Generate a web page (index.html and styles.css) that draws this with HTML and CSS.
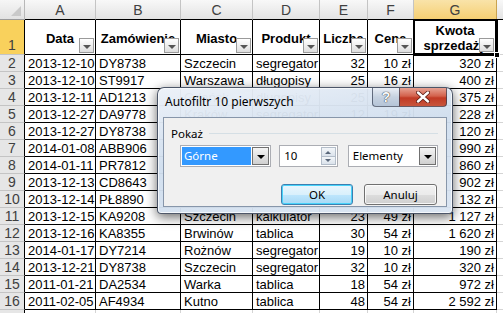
FILE: index.html
```html
<!DOCTYPE html>
<html lang="pl">
<head>
    <meta charset="UTF-8">
    <title>Autofiltr 10 pierwszych</title>
    <link rel="stylesheet" href="styles.css">
</head>
<body>
    <div class="sheet">
        <div class="grid">
            <!-- column letters -->
            <div class="corner"><span class="corner-tri"></span></div>
            <div class="colhead">A</div>
            <div class="colhead">B</div>
            <div class="colhead">C</div>
            <div class="colhead">D</div>
            <div class="colhead">E</div>
            <div class="colhead">F</div>
            <div class="colhead sel">G</div>
            <div class="colhead"></div>

            <!-- header row -->
            <div class="rowhead first sel">1</div>
            <div class="cell head"><span>Data</span><i class="filter"></i></div>
            <div class="cell head"><span>Zamówienie</span><i class="filter"></i></div>
            <div class="cell head"><span>Miasto</span><i class="filter"></i></div>
            <div class="cell head"><span>Produkt</span><i class="filter"></i></div>
            <div class="cell head"><span>Liczba</span><i class="filter"></i></div>
            <div class="cell head"><span>Cena</span><i class="filter"></i></div>
            <div class="cell head active"><span>Kwota sprzedaży</span><i class="filter"></i><i class="handle"></i></div>
            <div class="blank"></div>

            <div class="rowhead">2</div>
            <div class="cell num">2013-12-10</div><div class="cell">DY8738</div><div class="cell">Szczecin</div><div class="cell">segregator</div><div class="cell num">32</div><div class="cell num">10 zł</div><div class="cell num">320 zł</div><div class="blank"></div>

            <div class="rowhead">3</div>
            <div class="cell num">2013-12-10</div><div class="cell">ST9917</div><div class="cell">Warszawa</div><div class="cell">długopisy</div><div class="cell num">25</div><div class="cell num">16 zł</div><div class="cell num">400 zł</div><div class="blank"></div>

            <div class="rowhead">4</div>
            <div class="cell num">2013-12-11</div><div class="cell">AD1213</div><div class="cell">Gdańsk</div><div class="cell">długopisy</div><div class="cell num">25</div><div class="cell num">15 zł</div><div class="cell num">375 zł</div><div class="blank"></div>

            <div class="rowhead">5</div>
            <div class="cell num">2013-12-27</div><div class="cell">DA9778</div><div class="cell">Kraków</div><div class="cell">segregator</div><div class="cell num">12</div><div class="cell num">19 zł</div><div class="cell num">228 zł</div><div class="blank"></div>

            <div class="rowhead">6</div>
            <div class="cell num">2013-12-27</div><div class="cell">DY8738</div><div class="cell">Szczecin</div><div class="cell">segregator</div><div class="cell num">12</div><div class="cell num">10 zł</div><div class="cell num">120 zł</div><div class="blank"></div>

            <div class="rowhead">7</div>
            <div class="cell num">2014-01-08</div><div class="cell">ABB906</div><div class="cell">Warszawa</div><div class="cell">kalkulator</div><div class="cell num">22</div><div class="cell num">45 zł</div><div class="cell num">990 zł</div><div class="blank"></div>

            <div class="rowhead">8</div>
            <div class="cell num">2014-01-11</div><div class="cell">PR7812</div><div class="cell">Poznań</div><div class="cell">tablica</div><div class="cell num">20</div><div class="cell num">43 zł</div><div class="cell num">860 zł</div><div class="blank"></div>

            <div class="rowhead">9</div>
            <div class="cell num">2013-12-13</div><div class="cell">CD8643</div><div class="cell">Kraków</div><div class="cell">długopisy</div><div class="cell num">22</div><div class="cell num">41 zł</div><div class="cell num">902 zł</div><div class="blank"></div>

            <div class="rowhead">10</div>
            <div class="cell num">2013-12-14</div><div class="cell">PŁ8890</div><div class="cell">Płock</div><div class="cell">segregator</div><div class="cell num">12</div><div class="cell num">11 zł</div><div class="cell num">132 zł</div><div class="blank"></div>

            <div class="rowhead">11</div>
            <div class="cell num">2013-12-15</div><div class="cell">KA9208</div><div class="cell">Szczecin</div><div class="cell">kalkulator</div><div class="cell num">23</div><div class="cell num">49 zł</div><div class="cell num">1 127 zł</div><div class="blank"></div>

            <div class="rowhead">12</div>
            <div class="cell num">2013-12-16</div><div class="cell">KA8355</div><div class="cell">Brwinów</div><div class="cell">tablica</div><div class="cell num">30</div><div class="cell num">54 zł</div><div class="cell num">1 620 zł</div><div class="blank"></div>

            <div class="rowhead">13</div>
            <div class="cell num">2014-01-17</div><div class="cell">DY7214</div><div class="cell">Rożnów</div><div class="cell">segregator</div><div class="cell num">19</div><div class="cell num">10 zł</div><div class="cell num">190 zł</div><div class="blank"></div>

            <div class="rowhead">14</div>
            <div class="cell num">2013-12-21</div><div class="cell">DY8738</div><div class="cell">Szczecin</div><div class="cell">segregator</div><div class="cell num">32</div><div class="cell num">10 zł</div><div class="cell num">320 zł</div><div class="blank"></div>

            <div class="rowhead">15</div>
            <div class="cell num">2011-01-21</div><div class="cell">DA2534</div><div class="cell">Warka</div><div class="cell">tablica</div><div class="cell num">18</div><div class="cell num">54 zł</div><div class="cell num">972 zł</div><div class="blank"></div>

            <div class="rowhead">16</div>
            <div class="cell num">2011-02-05</div><div class="cell">AF4934</div><div class="cell">Kutno</div><div class="cell">tablica</div><div class="cell num">48</div><div class="cell num">54 zł</div><div class="cell num">2 592 zł</div><div class="blank"></div>

            <div class="rowhead"></div>
            <div class="blank"></div><div class="blank"></div><div class="blank"></div><div class="blank"></div><div class="blank"></div><div class="blank"></div><div class="blank"></div><div class="blank"></div>
        </div>

        <!-- Top 10 dialog -->
        <div class="dialog">
            <div class="titlebar">
                <span class="title">Autofiltr 10 pierwszych</span>
                <div class="caption-btns">
                    <span class="cap-btn help">?</span>
                    <span class="cap-btn close">
                        <svg width="14" height="12" viewBox="0 0 14 12">
                            <path d="M2 1.5 L12 10.5 M12 1.5 L2 10.5" stroke="#5a1a12" stroke-width="4" stroke-linecap="round"/>
                            <path d="M2 1.5 L12 10.5 M12 1.5 L2 10.5" stroke="#fff" stroke-width="2.4" stroke-linecap="round"/>
                        </svg>
                    </span>
                </div>
            </div>
            <div class="client">
                <div class="group">
                    <span>Pokaż</span>
                    <i class="rule"></i>
                </div>
                <div class="controls">
                    <div class="combo first-combo">
                        <span class="value"><span class="picked">Górne</span></span>
                        <span class="drop"><i class="tri"></i></span>
                    </div>
                    <div class="spin">
                        <span class="value">10</span>
                        <span class="arrows"><i class="up"></i><i class="down"></i></span>
                    </div>
                    <div class="combo">
                        <span class="value">Elementy</span>
                        <span class="drop"><i class="tri"></i></span>
                    </div>
                </div>
                <div class="buttons">
                    <button class="btn default">OK</button>
                    <button class="btn">Anuluj</button>
                </div>
            </div>
        </div>
    </div>
</body>
</html>
```

FILE: styles.css
```css
* {
    margin: 0;
    padding: 0;
    box-sizing: border-box;
}

body {
    width: 503px;
    height: 313px;
    overflow: hidden;
    background: #fff;
    font-family: 'Liberation Sans', Arial, sans-serif;
    font-size: 13px;
    color: #000;
}

.sheet {
    position: relative;
    width: 503px;
    height: 313px;
    overflow: hidden;
}

.grid {
    display: grid;
    grid-template-columns: 25px 71px 85px 72px 67px 48px 46px 83px 40px;
    grid-template-rows: 20px 35px repeat(16, 17px);
    width: 537px;
}

/* headers */
.corner {
    position: relative;
    background: linear-gradient(#f6f6f6, #e2e2e2);
    border-right: 1px solid #b8b8b8;
    border-bottom: 1px solid #9c9c9c;
}

.corner-tri {
    position: absolute;
    right: 3px;
    bottom: 3px;
    width: 0;
    height: 0;
    border-left: 10px solid transparent;
    border-bottom: 10px solid #c9c9c9;
}

.colhead {
    background: linear-gradient(#f8f8f8, #e3e3e3);
    border-right: 1px solid #c4c4c4;
    border-bottom: 1px solid #000;
    color: #404040;
    font-size: 14px;
    text-align: center;
    line-height: 20px;
}

.colhead.sel {
    background: linear-gradient(#f9e3a9, #f5cf73);
    border-right-color: #c9a34f;
}

.rowhead {
    background: #e6e6e6;
    border-right: 1px solid #000;
    border-bottom: 1px solid #c4c4c4;
    color: #404040;
    font-size: 14px;
    text-align: center;
    line-height: 16px;
}

.rowhead.first {
    display: flex;
    align-items: flex-end;
    justify-content: center;
    padding-bottom: 1px;
}

.rowhead.sel {
    background: #f9d15c;
}

/* cells */
.cell {
    border-right: 1px solid #000;
    border-bottom: 1px solid #000;
    padding: 0 2px 0 3px;
    white-space: nowrap;
    overflow: hidden;
    line-height: 17px;
}

.cell.num {
    text-align: right;
}

.cell.head {
    position: relative;
    display: flex;
    align-items: center;
    justify-content: center;
    text-align: center;
    font-weight: bold;
    line-height: 15px;
    white-space: normal;
    padding: 0;
    overflow: visible;
    background: #fff;
}

.cell.head span {
    display: block;
    padding-top: 2px;
    white-space: nowrap;
}

.cell.head.active span {
    white-space: normal;
    width: 70px;
}

.cell.head.active {
    box-shadow: inset 0 0 0 1px #000;
    outline: 1px solid #000;
    z-index: 2;
}

.filter {
    position: absolute;
    right: 1px;
    bottom: 1px;
    width: 15px;
    height: 15px;
    border: 1px solid #9a9a9a;
    background: linear-gradient(#ffffff, #dedede);
}

.filter::after {
    content: '';
    position: absolute;
    left: 3px;
    top: 6px;
    border-left: 4px solid transparent;
    border-right: 4px solid transparent;
    border-top: 4px solid #555;
}

.handle {
    position: absolute;
    right: -4px;
    bottom: -4px;
    width: 6px;
    height: 6px;
    background: #000;
    border: 1px solid #fff;
    z-index: 3;
}

.cell.head.active .filter {
    right: 2px;
    bottom: 2px;
    height: 14px;
}

.blank {
    border-right: 1px solid #d4d4d4;
    border-bottom: 1px solid #d4d4d4;
}

/* dialog */
.dialog {
    position: absolute;
    left: 157px;
    top: 87px;
    width: 296px;
    height: 127px;
    display: flex;
    flex-direction: column;
    padding: 0 5px 6px 5px;
    border: 1px solid rgba(40, 50, 70, 0.8);
    border-radius: 7px 7px 4px 4px;
    background: linear-gradient(170deg, rgba(236, 241, 248, 0.97) 0%, rgba(208, 222, 238, 0.96) 45%, rgba(218, 229, 242, 0.97) 100%);
    box-shadow: inset 0 0 0 1px rgba(255, 255, 255, 0.7), 0 3px 12px rgba(0, 0, 0, 0.6);
    font-family: 'Noto Sans', 'Open Sans', sans-serif;
    font-size: 11.5px;
    color: #000;
    z-index: 10;
}

.titlebar {
    height: 29px;
    display: flex;
    justify-content: space-between;
    align-items: flex-start;
}

.title {
    padding: 6px 0 0 2px;
    line-height: 16px;
    font-size: 12px;
}

.caption-btns {
    display: flex;
}

.cap-btn {
    height: 19px;
    display: flex;
    align-items: center;
    justify-content: center;
    border: 1px solid rgba(50, 60, 80, 0.7);
    border-top: none;
}

.help {
    width: 27px;
    border-right: none;
    border-radius: 0 0 0 4px;
    background: linear-gradient(#e9eef5, #c6d2e0 50%, #b5c4d7);
    color: #f6f8fb;
    font-family: 'Liberation Sans', Arial, sans-serif;
    font-weight: bold;
    font-size: 14px;
    text-shadow: 0 0 1px #333, 0 0 1px #333;
}

.close {
    width: 48px;
    border-radius: 0 0 4px 0;
    background: linear-gradient(#e6a293, #d3614c 45%, #c13a25 55%, #c8553c);
}

.client {
    flex: 1;
    display: flex;
    flex-direction: column;
    background: #f0f0f0;
    border: 1px solid #8796aa;
    padding: 7px 8px 0 7px;
}

.group {
    display: flex;
    align-items: center;
    gap: 6px;
    height: 16px;
}

.rule {
    flex: 1;
    height: 1px;
    margin-top: 1px;
    background: #d5dfe5;
}

.controls {
    display: flex;
    align-items: center;
    margin-top: 4px;
    padding-left: 9px;
    height: 22px;
}

.combo,
.spin {
    display: flex;
    height: 22px;
    background: #fff;
    border: 1px solid #abadb3;
    padding: 1px;
}

.combo {
    width: 91px;
    margin-left: 10px;
}

.combo.first-combo {
    width: 92px;
    margin-left: 0;
}

.value {
    flex: 1;
    display: flex;
    align-items: center;
    padding-left: 3px;
    line-height: 16px;
}

.first-combo .value {
    padding-left: 0;
}

.picked {
    display: flex;
    align-items: center;
    width: 100%;
    height: 100%;
    padding-left: 2px;
    background: #3399ff;
    color: #fff;
}

.drop {
    position: relative;
    width: 17px;
    margin-left: 1px;
    border: 1px solid #707070;
    background: linear-gradient(#f4f4f4, #e2e2e2 50%, #d0d0d0);
}

.tri {
    position: absolute;
    left: 4px;
    top: 7px;
    border-left: 4px solid transparent;
    border-right: 4px solid transparent;
    border-top: 4px solid #000;
}

.spin {
    width: 59px;
    margin-left: 8px;
}

.arrows {
    display: flex;
    flex-direction: column;
    width: 15px;
}

.arrows i {
    position: relative;
    flex: 1;
    border: 1px solid #b3bdc9;
    background: linear-gradient(#f3f6f9, #dbe3ec);
}

.arrows i + i {
    border-top: none;
}

.arrows i::after {
    content: '';
    position: absolute;
    left: 3px;
    top: 3px;
    border-left: 3.5px solid transparent;
    border-right: 3.5px solid transparent;
}

.arrows .up::after {
    border-bottom: 3px solid #59677a;
}

.arrows .down::after {
    top: 2px;
    border-top: 3px solid #59677a;
}

.buttons {
    display: flex;
    justify-content: flex-end;
    gap: 11px;
    margin-top: 17px;
    padding-right: 1px;
}

.btn {
    height: 21px;
    width: 73px;
    border: 1px solid #707070;
    border-radius: 3px;
    background: linear-gradient(#f2f2f2, #ebebeb 50%, #dddddd 51%, #cfcfcf);
    box-shadow: inset 0 0 0 1px rgba(255, 255, 255, 0.8);
    font-family: 'Noto Sans', 'Open Sans', sans-serif;
    font-size: 11.5px;
    color: #000;
}

.btn.default {
    width: 72px;
    border-color: #3c7fb1;
    background: linear-gradient(#eaf6fd, #d9f0fc 50%, #bee6fd 51%, #a7d9f5);
    box-shadow: inset 0 0 0 1px #48d3fa;
}
```
